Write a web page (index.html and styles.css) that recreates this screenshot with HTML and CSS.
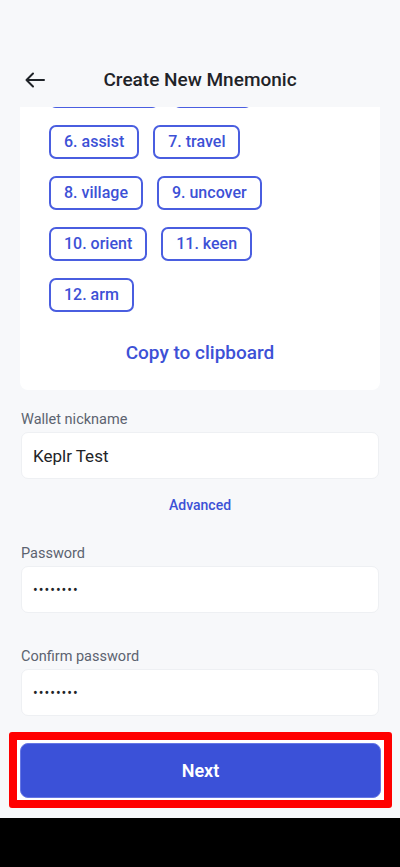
FILE: index.html
```html
<!DOCTYPE html>
<html lang="en">
<head>
<meta charset="utf-8">
<title>Create New Mnemonic</title>
<link rel="stylesheet" href="styles.css">
</head>
<body>
  <header class="header">
    <button class="back" aria-label="Back">
      <svg width="20" height="16" viewBox="0 0 20 16" fill="none" stroke="#1f2328" stroke-width="2" stroke-linecap="round" stroke-linejoin="round"><path d="M19 8H1.5M8 1.5L1.5 8L8 14.5"/></svg>
    </button>
    <h1 class="title">Create New Mnemonic</h1>
    <span></span>
  </header>

  <main class="main">
    <section class="card">
      <div class="words">
        <div class="row"><span class="chip">4. dinosaur</span><span class="chip">5. gate</span></div>
        <div class="row"><span class="chip">6. assist</span><span class="chip">7. travel</span></div>
        <div class="row"><span class="chip">8. village</span><span class="chip">9. uncover</span></div>
        <div class="row"><span class="chip">10. orient</span><span class="chip">11. keen</span></div>
        <div class="row"><span class="chip">12. arm</span></div>
      </div>
      <div class="copy">Copy to clipboard</div>
    </section>

    <div class="field first">
      <label class="label">Wallet nickname</label>
      <div class="input">Keplr Test</div>
    </div>
    <div class="advanced">Advanced</div>
    <div class="field pw">
      <label class="label">Password</label>
      <div class="input dots">••••••••</div>
    </div>
    <div class="field confirm">
      <label class="label">Confirm password</label>
      <div class="input dots">••••••••</div>
    </div>
  </main>

  <footer class="footer">
    <div class="highlight">
      <button class="next">Next</button>
    </div>
  </footer>
  <div class="navbar"></div>
</body>
</html>
```

FILE: styles.css
```css
* { box-sizing: border-box; }
html, body { margin: 0; padding: 0; }
body {
  width: 400px;
  height: 867px;
  background: #f7f8fa;
  font-family: Roboto, "Noto Sans", "Liberation Sans", sans-serif;
  display: flex;
  flex-direction: column;
  overflow: hidden;
}
.header {
  height: 107px;
  flex: none;
  display: grid;
  grid-template-columns: 1fr auto 1fr;
  align-items: center;
  padding: 64px 0 11px;
}
.back {
  justify-self: start;
  margin-left: 25px;
  padding: 0;
  border: 0;
  background: none;
  width: 20px;
  height: 16px;
  display: flex;
}
.title {
  margin: 0;
  font-size: 19px;
  font-weight: 500;
  color: #1f2328;
  line-height: 32px;
}
.main {
  flex: 1;
  min-height: 0;
  overflow: hidden;
  display: flex;
  flex-direction: column;
  justify-content: flex-end;
  padding: 0 20px 8px;
}
.card {
  flex: none;
  background: #ffffff;
  border-radius: 8px;
  padding: 24px 29px 25px;
}
.words {
  display: flex;
  flex-direction: column;
  gap: 17px;
}
.row {
  display: flex;
  gap: 14px;
}
.chip {
  height: 34px;
  line-height: 30px;
  padding: 0 13px;
  border: 2px solid #4a5ee0;
  border-radius: 7px;
  color: #3d51d6;
  font-size: 16px;
  font-weight: 500;
  white-space: nowrap;
}
.copy {
  margin-top: 29px;
  line-height: 24px;
  text-align: center;
  color: #3d51d6;
  font-size: 19px;
  font-weight: 500;
}
.field { flex: none; display: flex; flex-direction: column; }
.field.first { margin-top: 20px; }
.field.pw { margin-top: 29px; }
.field.confirm { margin-top: 34px; }
.label {
  line-height: 20px;
  font-size: 14.5px;
  color: #5c6370;
  margin: 0 1px 2px;
}
.input {
  height: 47px;
  margin: 0 1px;
  background: #ffffff;
  border: 1px solid #eef0f3;
  border-radius: 7px;
  padding: 0 11px;
  display: flex;
  align-items: center;
  font-size: 17px;
  color: #222428;
}
.input.dots {
  font-size: 14px;
  letter-spacing: 1px;
  color: #222428;
}
.advanced {
  flex: none;
  margin-top: 16px;
  line-height: 20px;
  text-align: center;
  color: #3d51d6;
  font-size: 14px;
  font-weight: 500;
}
.footer {
  flex: none;
  height: 94px;
  padding: 8px 8px 10px 9px;
}
.highlight {
  height: 76px;
  border: 8px solid #ff0000;
  border-radius: 3px;
  background: #ffffff;
  padding: 3px 3px 2px;
}
.next {
  width: 100%;
  height: 100%;
  border: 1px solid #6677e4;
  border-radius: 8px;
  background: #3b51d8;
  color: #ffffff;
  font-family: Roboto, "Noto Sans", "Liberation Sans", sans-serif;
  font-size: 18px;
  font-weight: 600;
  padding: 0;
}
.navbar {
  flex: none;
  height: 49px;
  background: #000000;
}
```
